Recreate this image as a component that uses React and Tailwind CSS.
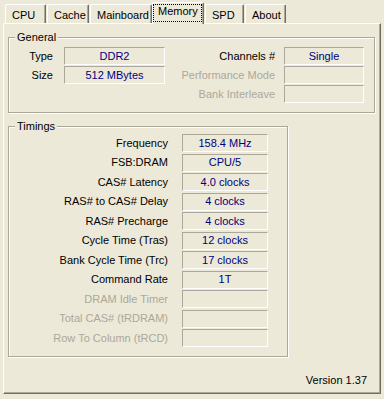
import React from "react";

const tabs = [
  { label: "CPU", w: "w-[41px]", ml: "ml-[5px]" },
  { label: "Cache", w: "w-[42px]", ml: "ml-[1px]" },
  { label: "Mainboard", w: "w-[62px]", ml: "ml-[1px]" },
  { label: "Memory", w: "w-[52px]", ml: "ml-0", active: true },
  { label: "SPD", w: "w-[39px]", ml: "ml-[1px]" },
  { label: "About", w: "w-[41px]", ml: "ml-[1px]" },
];

const timings = [
  { label: "Frequency", value: "158.4 MHz" },
  { label: "FSB:DRAM", value: "CPU/5" },
  { label: "CAS# Latency", value: "4.0 clocks" },
  { label: "RAS# to CAS# Delay", value: "4 clocks" },
  { label: "RAS# Precharge", value: "4 clocks" },
  { label: "Cycle Time (Tras)", value: "12 clocks" },
  { label: "Bank Cycle Time (Trc)", value: "17 clocks" },
  { label: "Command Rate", value: "1T" },
  { label: "DRAM Idle Timer", value: "", disabled: true },
  { label: "Total CAS# (tRDRAM)", value: "", disabled: true },
  { label: "Row To Column (tRCD)", value: "", disabled: true },
];

function Field({ value, width }) {
  return (
    <div
      className={`${width} h-[18px] flex items-center justify-center border border-t-[#ACA899] border-l-[#ACA899] border-r-white border-b-white text-[#000080]`}
    >
      {value}
    </div>
  );
}

function Label({ children, width, disabled }) {
  return (
    <div
      className={`${width} h-[18px] flex items-center justify-end whitespace-nowrap ${
        disabled ? "text-[#ACA899]" : "text-black"
      }`}
    >
      {children}
    </div>
  );
}

function Group({ title, className, children }) {
  return (
    <div
      className={`relative border border-[#ACA899] shadow-[inset_1px_1px_0_#fff,1px_1px_0_#fff] ${className}`}
    >
      <span className="absolute left-[6px] top-[-7px] px-[2px] bg-[#ECE9D8] text-black">
        {title}
      </span>
      {children}
    </div>
  );
}

export default function App() {
  return (
    <div className="w-[384px] h-[399px] bg-[#ECE9D8] font-['Liberation_Sans',Arial,sans-serif] text-[11px] leading-[13px] overflow-hidden">
      {/* tabs */}
      <div className="flex items-end h-[23px]">
        {tabs.map((t) =>
          t.active ? (
            <div
              key={t.label}
              className={`${t.w} ${t.ml} relative z-10 -mb-px h-[22px] bg-[#ECE9D8] border-l border-t border-white border-r border-r-[#716F64] shadow-[inset_-1px_0_0_#ACA899] rounded-t-[2px]`}
            >
              <div className="mt-[1px] w-[49px] h-[18px] border border-dotted border-black pl-[4px] text-black">
                {t.label}
              </div>
            </div>
          ) : (
            <div
              key={t.label}
              className={`${t.w} ${t.ml} h-[19px] bg-[#ECE9D8] border-l border-t border-white border-r border-r-[#716F64] shadow-[inset_-1px_0_0_#ACA899] rounded-t-[2px] pl-[6px] pt-[4px] text-black`}
            >
              {t.label}
            </div>
          )
        )}
      </div>

      {/* panel */}
      <div className="ml-[3px] w-[378px] h-[371px] border-l border-t border-white border-r border-b border-r-[#716F64] border-b-[#716F64] shadow-[inset_-1px_-1px_0_#ACA899] flex flex-col">
        <Group title="General" className="ml-[4px] mt-[13px] w-[367px] h-[76px] pt-[9px]">
          <div className="flex">
            <div className="flex flex-col gap-[1px]">
              <div className="flex">
                <Label width="w-[44px]">Type</Label>
                <div className="ml-[11px]">
                  <Field value="DDR2" width="w-[101px]" />
                </div>
              </div>
              <div className="flex">
                <Label width="w-[44px]">Size</Label>
                <div className="ml-[11px]">
                  <Field value="512 MBytes" width="w-[101px]" />
                </div>
              </div>
            </div>
            <div className="flex flex-col gap-[1px]">
              <div className="flex">
                <Label width="w-[110px]">Channels #</Label>
                <div className="ml-[9px]">
                  <Field value="Single" width="w-[80px]" />
                </div>
              </div>
              <div className="flex">
                <Label width="w-[110px]" disabled>
                  Performance Mode
                </Label>
                <div className="ml-[9px]">
                  <Field value="" width="w-[80px]" />
                </div>
              </div>
              <div className="flex">
                <Label width="w-[110px]" disabled>
                  Bank Interleave
                </Label>
                <div className="ml-[9px]">
                  <Field value="" width="w-[80px]" />
                </div>
              </div>
            </div>
          </div>
        </Group>

        <Group title="Timings" className="ml-[4px] mt-[13px] w-[280px] h-[231px] pt-[7px]">
          <div className="flex flex-col gap-[1.5px]">
            {timings.map((r) => (
              <div key={r.label} className="flex">
                <Label width="w-[159px]" disabled={r.disabled}>
                  {r.label}
                </Label>
                <div className="ml-[14px]">
                  <Field value={r.value} width="w-[86px]" />
                </div>
              </div>
            ))}
          </div>
        </Group>

        <div className="mt-[17px] flex justify-end pr-[13px] text-black">
          Version 1.37
        </div>
      </div>
    </div>
  );
}
